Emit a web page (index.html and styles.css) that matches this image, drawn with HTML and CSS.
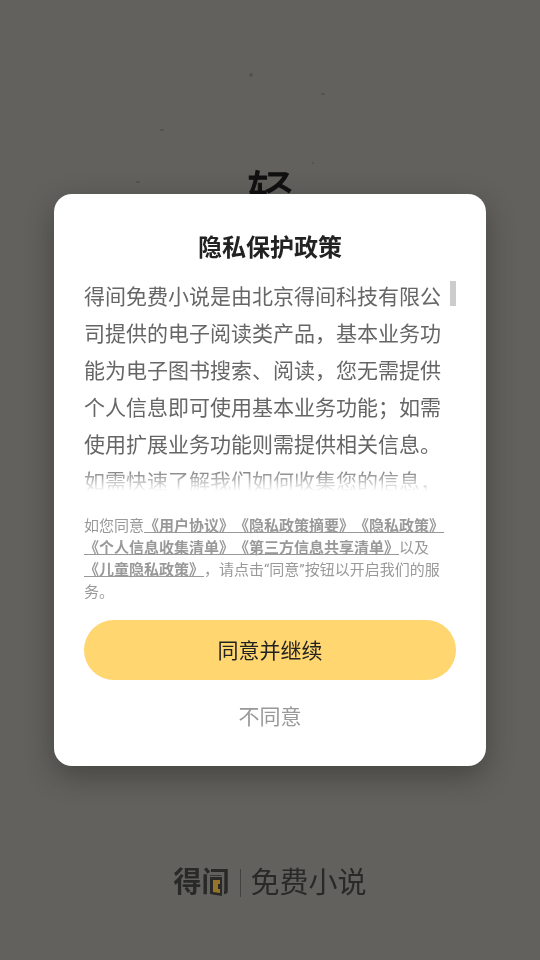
FILE: index.html
```html
<!DOCTYPE html>
<html lang="zh-CN">
  <head>
    <meta charset="utf-8">
    <meta name="viewport" content="width=device-width, initial-scale=1">
    <title>得间免费小说</title>
    <link rel="stylesheet" href="styles.css">
  </head>
  <body>
    <!-- splash screen under the dialog -->
    <div class="splash">
      <svg class="paper" viewBox="0 0 540 960" preserveAspectRatio="xMidYMin slice" aria-hidden="true">
        <ellipse cx="251" cy="75" rx="2" ry="2" />
        <ellipse cx="323" cy="94" rx="2" ry="1" />
        <ellipse cx="162" cy="130" rx="2" ry="1" />
        <ellipse cx="313" cy="163" rx="1" ry="1" />
        <ellipse cx="138" cy="182" rx="2" ry="1" />
      </svg>
      <div class="slogan">轻</div>
      <div class="brand">
        <span class="brand-name">得间
          <svg class="door" viewBox="0 0 16 21" aria-hidden="true">
            <rect x="0" y="0" width="16" height="21" fill="#62615d" />
            <path d="M2 1h12v19l-12-2z" fill="#292928" />
            <path d="M5 4h7v4h-2v5h2v4l-7-1z" fill="#967429" />
          </svg>
        </span>
        <span class="brand-line"></span>
        <span class="brand-type">免费小说</span>
      </div>
    </div>

    <div class="mask">
      <div class="dialog" role="dialog" aria-labelledby="title">
        <h1 id="title">隐私保护政策</h1>
        <div class="content">
          <p>得间免费小说是由北京得间科技有限公司提供的电子阅读类产品，基本业务功能为电子图书搜索、阅读，您无需提供个人信息即可使用基本业务功能；如需使用扩展业务功能则需提供相关信息。如需快速了解我们如何收集您的信息，</p>
          <span class="thumb"></span>
        </div>
        <p class="agree">如您同意<a href="#">《用户协议》</a><a href="#">《隐私政策摘要》</a><a href="#">《隐私政策》</a><a href="#">《个人信息收集清单》</a><a href="#">《第三方信息共享清单》</a>以及<a href="#">《儿童隐私政策》</a>，请点击“同意”按钮以开启我们的服务。</p>
        <button type="button" class="btn btn-ok">同意并继续</button>
        <button type="button" class="btn btn-no">不同意</button>
      </div>
    </div>
  </body>
</html>
```

FILE: styles.css
```css
* {
  box-sizing: border-box;
}
body {
  margin: 0;
  background-color: #62615d;
  color: #666;
  font-family: Roboto, "Noto Sans CJK SC", sans-serif;
  text-spacing-trim: space-all;
}
h1, p {
  margin: 0;
}

/* splash */
.splash {
  position: fixed;
  inset: 0;
  display: flex;
  flex-direction: column;
  justify-content: space-between;
  align-items: center;
  padding: 165px 0 53px;
}
.paper {
  position: absolute;
  top: 0;
  left: 0;
  width: 100%;
  height: 100%;
  fill: #53524e;
}
.slogan {
  position: relative;
  color: #111;
  font-size: 46px;
  line-height: 56px;
  -webkit-text-stroke: 1px #111;
}
.brand {
  position: relative;
  display: flex;
  align-items: center;
  gap: 10px;
  color: #292928;
  line-height: 48px;
}
.brand-name {
  position: relative;
  font-size: 28px;
  font-weight: 700;
}
.brand-line {
  width: 1px;
  height: 28px;
  background-color: #42413f;
}
.brand-type {
  font-size: 29px;
}
.door {
  position: absolute;
  right: 6px;
  top: 17px;
  width: 16px;
  height: 21px;
}

/* dialog */
.mask {
  position: relative;
  display: flex;
  justify-content: center;
  align-items: center;
  min-height: 100vh;
}
.dialog {
  width: 80%;
  padding: 37px 30px 28px;
  border-radius: 18px;
  background-color: #fff;
  box-shadow: 0 10px 30px rgba(0, 0, 0, 0.3);
}
.dialog h1 {
  color: #222;
  font-size: 24px;
  font-weight: 700;
  line-height: 34px;
  text-align: center;
}
.content {
  position: relative;
  height: 212px;
  margin-top: 14px;
  padding-right: 12px;
  overflow: hidden;
  font-size: 21px;
  line-height: 37px;
}
.content::after {
  content: "";
  position: absolute;
  left: 0;
  right: 0;
  bottom: 0;
  height: 24px;
  background: linear-gradient(rgba(255, 255, 255, 0), #fff);
}
.thumb {
  position: absolute;
  top: 2px;
  right: 0;
  width: 6px;
  height: 25px;
  background-color: #ccc;
}
.agree {
  margin-top: 24px;
  color: #999;
  font-size: 15px;
  line-height: 22px;
}
.agree a {
  color: #999;
  font-weight: 700;
  text-decoration: underline;
}
.btn {
  display: block;
  width: 100%;
  padding: 0 0 2px;
  border: 0;
  background: none;
  font-family: inherit;
  font-size: 21px;
  cursor: pointer;
}
.btn-ok {
  height: 60px;
  margin-top: 17px;
  border-radius: 30px;
  background-color: #ffd66f;
  color: #222;
}
.btn-no {
  height: 44px;
  margin-top: 14px;
  color: #999;
}
```
